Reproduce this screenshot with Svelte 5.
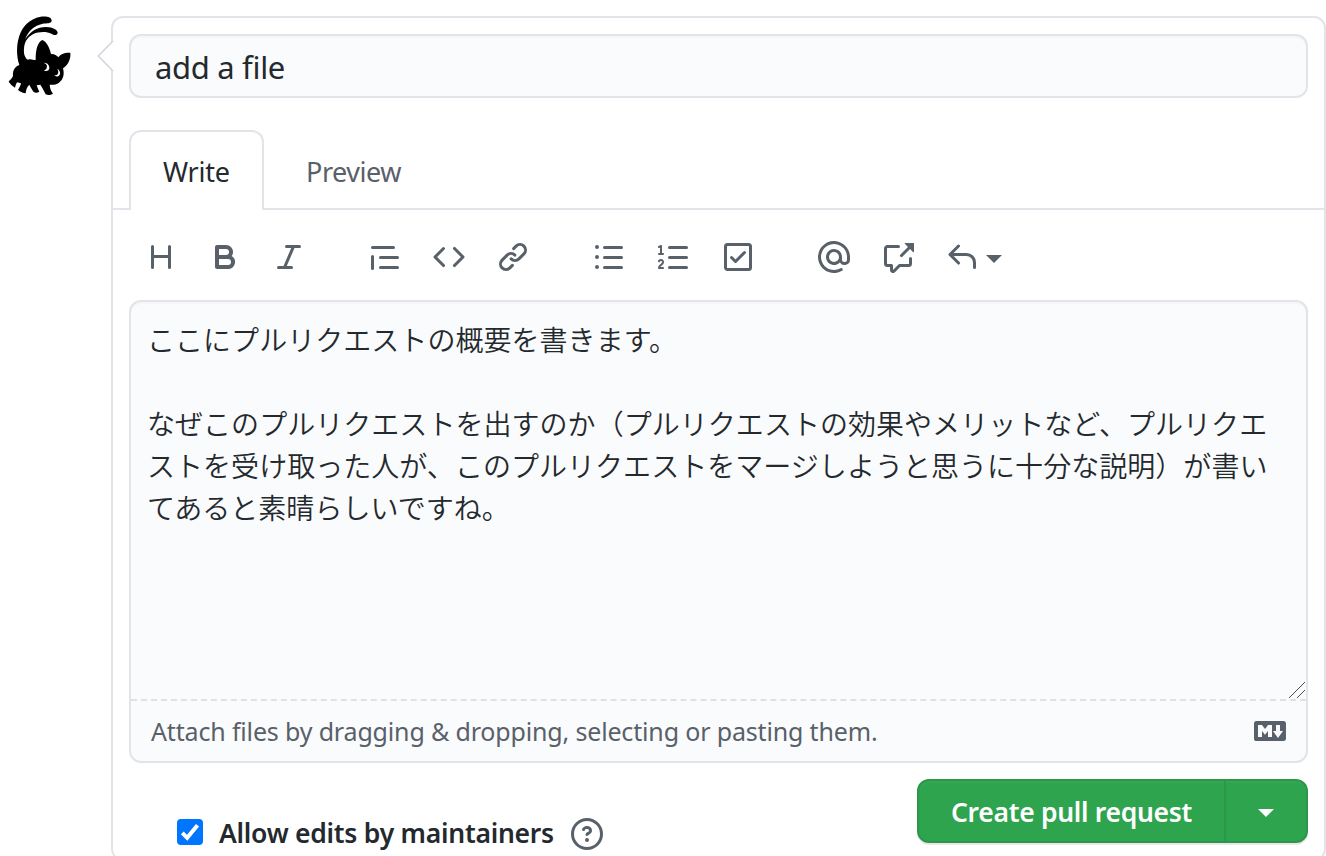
<script>
  const groups = [
    [
      { name: 'Heading', d: 'M3.75 2a.75.75 0 01.75.75V7h7V2.75a.75.75 0 011.5 0v10.5a.75.75 0 01-1.5 0V8.5h-7v4.75a.75.75 0 01-1.5 0V2.75A.75.75 0 013.75 2z' },
      { name: 'Bold', d: 'M4 2a1 1 0 00-1 1v10a1 1 0 001 1h5.5a3.5 3.5 0 001.852-6.47A3.5 3.5 0 008.5 2H4zm4.5 5a1.5 1.5 0 100-3H5v3h3.5zM5 9v3h4.5a1.5 1.5 0 000-3H5z' },
      { name: 'Italic', d: 'M6 2.75A.75.75 0 016.75 2h6.5a.75.75 0 010 1.5h-2.505l-3.858 9H9.25a.75.75 0 010 1.5h-6.5a.75.75 0 010-1.5h2.505l3.858-9H6.75A.75.75 0 016 2.75z' }
    ],
    [
      { name: 'Quote', d: 'M1.75 2.5a.75.75 0 000 1.5h10.5a.75.75 0 000-1.5H1.75zm4 5a.75.75 0 000 1.5h8.5a.75.75 0 000-1.5h-8.5zm0 5a.75.75 0 000 1.5h8.5a.75.75 0 000-1.5h-8.5zM2.5 7.75a.75.75 0 00-1.5 0v6a.75.75 0 001.5 0v-6z' },
      { name: 'Code', d: 'M4.72 3.22a.75.75 0 011.06 1.06L2.06 8l3.72 3.72a.75.75 0 11-1.06 1.06L.47 8.53a.75.75 0 010-1.06l4.25-4.25zm6.56 0a.75.75 0 10-1.06 1.06L13.94 8l-3.72 3.72a.75.75 0 101.06 1.06l4.25-4.25a.75.75 0 000-1.06l-4.25-4.25z' },
      { name: 'Link', d: 'M7.775 3.275a.75.75 0 001.06 1.06l1.25-1.25a2 2 0 112.83 2.83l-2.5 2.5a2 2 0 01-2.83 0 .75.75 0 00-1.06 1.06 3.5 3.5 0 004.95 0l2.5-2.5a3.5 3.5 0 00-4.95-4.95l-1.25 1.25zm-4.69 9.64a2 2 0 010-2.83l2.5-2.5a2 2 0 012.83 0 .75.75 0 001.06-1.06 3.5 3.5 0 00-4.95 0l-2.5 2.5a3.5 3.5 0 004.95 4.95l1.25-1.25a.75.75 0 00-1.06-1.06l-1.25 1.25a2 2 0 01-2.83 0z' }
    ],
    [
      { name: 'Bulleted list', d: 'M2 4a1 1 0 100-2 1 1 0 000 2zm3.75-1.5a.75.75 0 000 1.5h8.5a.75.75 0 000-1.5h-8.5zm0 5a.75.75 0 000 1.5h8.5a.75.75 0 000-1.5h-8.5zm0 5a.75.75 0 000 1.5h8.5a.75.75 0 000-1.5h-8.5zM3 8a1 1 0 11-2 0 1 1 0 012 0zm-1 6a1 1 0 100-2 1 1 0 000 2z' },
      { name: 'Numbered list', d: 'M2.003 2.5a.5.5 0 00-.723-.447l-1.003.5a.5.5 0 00.446.895l.28-.14V6H.5a.5.5 0 000 1h2.006a.5.5 0 100-1h-.503V2.5zM5 3.25a.75.75 0 01.75-.75h8.5a.75.75 0 010 1.5h-8.5A.75.75 0 015 3.25zm0 5a.75.75 0 01.75-.75h8.5a.75.75 0 010 1.5h-8.5A.75.75 0 015 8.25zm0 5a.75.75 0 01.75-.75h8.5a.75.75 0 010 1.5h-8.5a.75.75 0 01-.75-.75zM.924 10.32l.003-.004a.851.851 0 01.144-.153A.66.66 0 011.5 10c.195 0 .306.068.374.146a.57.57 0 01.128.376c0 .453-.269.682-.8 1.078l-.035.025C.692 11.98 0 12.495 0 13.5a.5.5 0 00.5.5h2.003a.5.5 0 000-1H1.146c.132-.197.351-.372.654-.597l.047-.035c.47-.35 1.156-.858 1.156-1.845 0-.365-.118-.744-.377-1.038-.268-.303-.658-.484-1.126-.484-.48 0-.84.202-1.068.392a1.858 1.858 0 00-.348.384l-.007.011-.004.007a.5.5 0 00.851.525z' },
      { name: 'Task list', d: 'M2.5 2.75a.25.25 0 01.25-.25h10.5a.25.25 0 01.25.25v10.5a.25.25 0 01-.25.25H2.75a.25.25 0 01-.25-.25V2.75zM2.75 1A1.75 1.75 0 001 2.75v10.5c0 .966.784 1.75 1.75 1.75h10.5A1.75 1.75 0 0015 13.25V2.75A1.75 1.75 0 0013.25 1H2.75zm9.03 5.28a.75.75 0 00-1.06-1.06L6.75 9.19 5.28 7.72a.75.75 0 00-1.06 1.06l2 2a.75.75 0 001.06 0l4.5-4.5z' }
    ],
    [
      { name: 'Mention', d: 'M4.75 2.37a6.5 6.5 0 006.5 11.26.75.75 0 01.75 1.298 8 8 0 113.994-7.273.754.754 0 01.006.095v1.5a2.75 2.75 0 01-5.072 1.475A4 4 0 1112 8v1.25a1.25 1.25 0 002.5 0V7.867a6.5 6.5 0 00-9.75-5.496V2.37zM10.5 8a2.5 2.5 0 10-5 0 2.5 2.5 0 005 0z' },
      { name: 'Reference', d: 'M16 1.25v4.146a.25.25 0 01-.427.177L14.03 4.03l-3.75 3.75a.75.75 0 11-1.06-1.06l3.75-3.75-1.543-1.543A.25.25 0 0111.604 1h4.146a.25.25 0 01.25.25zM2.75 3.5a.25.25 0 00-.25.25v7.5c0 .138.112.25.25.25h2a.75.75 0 01.75.75v2.19l2.72-2.72a.75.75 0 01.53-.22h4.5a.25.25 0 00.25-.25v-2.5a.75.75 0 111.5 0v2.5A1.75 1.75 0 0113.25 13H9.06l-2.573 2.573A1.457 1.457 0 014 14.543V13H2.75A1.75 1.75 0 011 11.25v-7.5C1 2.784 1.784 2 2.75 2h5.5a.75.75 0 010 1.5h-5.5z' },
      { name: 'Reply', caret: true, d: 'M6.78 1.97a.75.75 0 010 1.06L3.81 6h6.44A4.75 4.75 0 0115 10.75v2.5a.75.75 0 01-1.5 0v-2.5a3.25 3.25 0 00-3.25-3.25H3.81l2.97 2.97a.75.75 0 11-1.06 1.06L1.47 7.28a.75.75 0 010-1.06l4.25-4.25a.75.75 0 011.06 0z' }
    ]
  ];

  const body = [
    'ここにプルリクエストの概要を書きます。',
    '',
    'なぜこのプルリクエストを出すのか（プルリクエストの効果やメリットなど、プルリクエ',
    'ストを受け取った人が、このプルリクエストをマージしようと思うに十分な説明）が書い',
    'てあると素晴らしいですね。'
  ].join('\n');
</script>

<main class="page">
  <svg class="avatar" viewBox="0 0 240 300" aria-hidden="true">
    <path d="M58 180C42 130 52 48 122 35C140 33 155 36 155 47C154 56 140 54 128 56C102 62 86 76 75 103C92 78 112 66 138 66C160 66 173 76 173 83C172 92 162 92 154 86C140 79 116 80 100 87C80 98 70 114 72 144C74 156 80 164 84 164C94 160 102 167 107 165C107 132 113 112 127 105C142 112 149 130 153 147C162 146 170 151 175 157C180 148 194 142 211 143C213 162 204 180 189 190C194 208 190 224 177 233C169 239 158 240 149 239C150 250 153 258 159 266C152 271 143 271 137 268C131 256 126 247 121 239L110 241C113 249 115 255 118 260C112 264 106 264 101 261C96 253 91 246 88 239C81 246 78 254 77 265C69 264 61 260 54 255C58 248 62 242 63 235L51 232C48 237 46 243 45 248C38 243 31 238 26 230C30 224 37 219 39 212C38 198 43 186 58 180Z" />
    <path fill="#fff" d="M131 173C142 172 149 181 148 190C147 198 140 200 132 197C138 194 141 191 140 187C143 182 140 177 131 173Z" />
    <path fill="#fff" d="M172 191C181 196 184 209 174 214C169 216 165 213 163 211C172 212 179 204 172 191Z" />
  </svg>

  <section class="card">
    <svg class="pointer" viewBox="0 0 18 34" aria-hidden="true">
      <path d="M16 1L1.2 16L16 31" fill="#fff" stroke="#cbd0d6" stroke-width="1.3" />
    </svg>

    <div class="title-field"><span>add a file</span></div>

    <nav class="tabs">
      <div class="tab active"><span class="write">Write</span></div>
      <div class="tab"><span class="preview">Preview</span></div>
    </nav>

    <div class="toolbar">
      {#each groups as group}
        <div class="group">
          {#each group as icon}
            <span class="tool" role="img" aria-label={icon.name}>
              <svg viewBox="0 0 16 16"><path fill-rule="evenodd" d={icon.d} /></svg>
              {#if icon.caret}<i class="caret"></i>{/if}
            </span>
          {/each}
        </div>
      {/each}
    </div>

    <div class="editor">
      <div class="text">{body}
        <svg class="grip" viewBox="0 0 18 18" aria-hidden="true"><path d="M1 17L17 1M9 17L17 9" /></svg>
      </div>
      <div class="attach">
        <span>Attach files by dragging &amp; dropping, selecting or pasting them.</span>
        <svg viewBox="0 0 16 16" aria-hidden="true"><path fill-rule="evenodd" d="M14.85 3H1.15C.52 3 0 3.52 0 4.15v7.69C0 12.48.52 13 1.15 13h13.69c.64 0 1.15-.52 1.15-1.15v-7.7C16 3.52 15.48 3 14.85 3zM9 11H7V8L5.5 9.92 4 8v3H2V5h2l1.5 2L7 5h2v6zm2.99.5L9.5 8H11V5h2v3h1.5l-2.51 3.5z" /></svg>
      </div>
    </div>

    <footer>
      <div class="allow">
        <span class="check"><svg viewBox="0 0 26 26"><path d="M5.3 13.8L10.2 18.8L20.5 6.2" /></svg></span>
        <span class="label">Allow edits by maintainers</span>
        <svg class="help" viewBox="0 0 16 16" aria-hidden="true"><path fill-rule="evenodd" d="M8 1.5a6.5 6.5 0 100 13 6.5 6.5 0 000-13zM0 8a8 8 0 1116 0A8 8 0 010 8zm9 3a1 1 0 11-2 0 1 1 0 012 0zM6.92 6.085c.081-.16.19-.299.34-.398.145-.097.371-.187.74-.187.28 0 .553.087.738.225A.613.613 0 019 6.25c0 .177-.04.264-.077.318a.956.956 0 01-.277.245c-.076.051-.158.1-.258.161l-.007.004a7.728 7.728 0 00-.313.195 2.416 2.416 0 00-.692.661.75.75 0 001.248.832.956.956 0 01.276-.245 6.3 6.3 0 01.26-.16l.006-.004c.093-.057.204-.123.313-.195.222-.149.487-.355.692-.662.214-.32.329-.702.329-1.15 0-.76-.36-1.348-.863-1.725A2.76 2.76 0 008 4c-.631 0-1.155.16-1.572.438-.413.276-.68.638-.849.977a.75.75 0 101.342.67z" /></svg>
      </div>
      <div class="submit">
        <div class="main"><span>Create pull request</span></div>
        <div class="more"><i class="caret"></i></div>
      </div>
    </footer>
  </section>
</main>

<style>
  :global(body) { background: #fff; overflow: hidden; }
  .page, .page * { box-sizing: border-box; }
  .page {
    width: 1326px;
    height: 856px;
    overflow: hidden;
    display: flex;
    align-items: flex-start;
    color: #24292e;
    font-family: "Noto Sans", "Open Sans", "Noto Sans CJK JP", sans-serif;
    font-size: 27px;
  }
  svg { display: block; flex: none; fill: #586069; }
  span { white-space: nowrap; }
  .avatar { width: 80px; height: 100px; margin: 5px 31px 0 0; fill: #000; }
  .card {
    position: relative;
    width: 1215px;
    height: 845px;
    flex: none;
    margin-top: 16px;
    border: 2px solid #e1e4e8;
    border-radius: 12px;
    padding-top: 16px;
  }
  .pointer { position: absolute; left: -16px; top: 22px; width: 18px; height: 34px; }
  .title-field {
    height: 64px;
    margin: 0 16px;
    padding-left: 24px;
    border: 2px solid #e1e4e8;
    border-radius: 12px;
    background: #fafbfc;
    box-shadow: inset 0 2px 0 rgba(225, 228, 232, 0.2);
    font-size: 31px;
    line-height: 63px;
    letter-spacing: -0.32px;
  }
  .tabs { display: flex; height: 80px; margin-top: 32px; padding-left: 16px; box-shadow: inset 0 -2px #e1e4e8; }
  .tab { height: 80px; padding: 2px 33px 0; line-height: 80px; color: #586069; letter-spacing: -0.45px; }
  .tab.active {
    width: 135px;
    padding-left: 32px;
    color: #24292e;
    background: #fff;
    border: 2px solid #e1e4e8;
    border-bottom: 0;
    border-radius: 12px 12px 0 0;
    padding-top: 0;
    margin-right: 9px;
    letter-spacing: -0.25px;
  }
  .toolbar { display: flex; padding: 31px 0 0 32px; height: 90px; gap: 64px; }
  .group { display: flex; gap: 32.5px; }
  .group:first-child, .group:nth-child(2) { gap: 32px; }
  .group:last-child { margin-left: -0.5px; gap: 32px; }
  .tool { display: flex; align-items: center; gap: 8.5px; height: 32px; }
  .tool svg { width: 32px; height: 32px; }
  .caret { width: 0; height: 0; border: 8px solid transparent; border-top-color: #586069; border-bottom: 0; margin-top: 4px; }
  .editor {
    height: 463px;
    margin: 0 16px;
    border: 2px solid #e1e4e8;
    border-radius: 12px;
    background: #fafbfc;
    box-shadow: inset 0 2px 0 rgba(225, 228, 232, 0.2);
  }
  .text {
    position: relative;
    height: 399px;
    padding: 16px;
    border-bottom: 2px dashed #dfe2e5;
    font: 350 28px/42px "Noto Sans CJK JP", sans-serif;
    letter-spacing: 0.04px;
    white-space: pre;
  }
  .grip { position: absolute; right: 0; bottom: 0; width: 18px; height: 18px; fill: none; stroke: #4d4d4d; stroke-width: 1; }
  .attach { display: flex; align-items: center; justify-content: space-between; height: 60px; padding: 0 20px; color: #586069; font-size: 25px; letter-spacing: -0.16px; }
  .attach svg { width: 32px; height: 32px; }
  footer { display: flex; justify-content: space-between; margin: 16px 16px 0; }
  .allow { display: flex; align-items: center; height: 64px; margin: 23px 0 0 48px; font-weight: 600; }
  .check { width: 26px; height: 26px; border-radius: 4px; background: #0075ff; margin: -4px 16px 0 0; }
  .check svg { width: 26px; height: 26px; fill: none; stroke: #fff; stroke-width: 4; }
  .label { width: 352px; margin-top: -3px; font-size: 26.5px; letter-spacing: -0.25px; }
  .help { width: 32px; height: 32px; }
  .submit {
    display: flex;
    width: 391px;
    height: 64px;
    border: 2px solid #2c974b;
    border-radius: 12px;
    background: #2ea44f;
    color: #fff;
    box-shadow: 0 2px 0 rgba(27, 31, 35, 0.1), inset 0 2px 0 rgba(255, 255, 255, 0.03);
    font-size: 26.5px;
    font-weight: 600;
    line-height: 62px;
    letter-spacing: -0.3px;
  }
  .main { width: 307px; padding-left: 32px; border-right: 2px solid #2c974b; }
  .more { display: flex; flex: 1; align-items: center; justify-content: center; }
  .more .caret { border-top-color: #fff; }
</style>
